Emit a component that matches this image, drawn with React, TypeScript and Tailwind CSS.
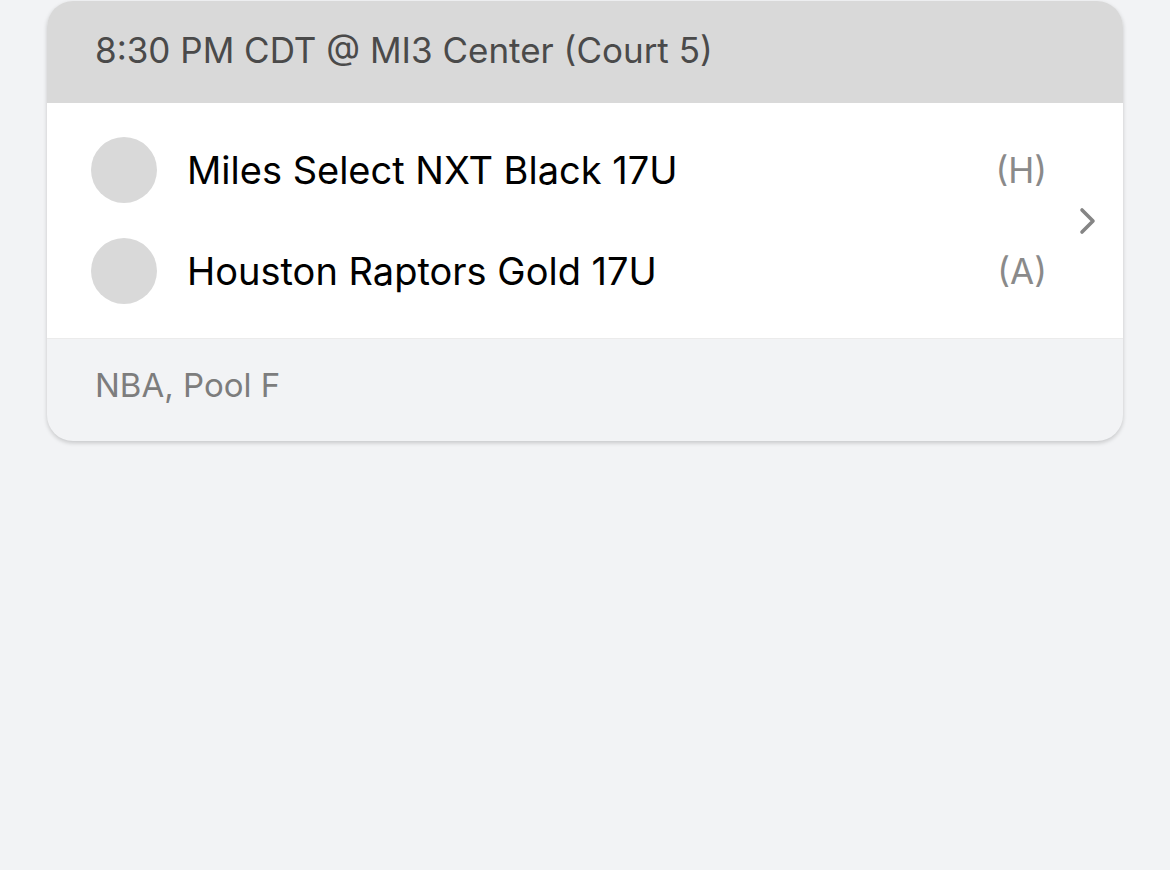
const teams = [
  { name: 'Miles Select NXT Black 17U', side: '(H)' },
  { name: 'Houston Raptors Gold 17U', side: '(A)' },
];

function Chevron() {
  return (
    <svg width="18" height="28" viewBox="0 0 18 28" className="shrink-0 text-[#858585]">
      <polyline
        points="3,3 14,14 3,25"
        fill="none"
        stroke="currentColor"
        strokeWidth="3.6"
        strokeLinecap="round"
        strokeLinejoin="round"
      />
    </svg>
  );
}

export default function App() {
  return (
    <div
      className="min-h-screen w-full bg-[#f2f3f5] px-[47px] pt-px"
      style={{ fontFamily: 'Inter, "Noto Sans", sans-serif' }}
    >
      <div className="overflow-hidden rounded-[26px] bg-[#f2f3f5] shadow-[0_2px_4px_rgba(0,0,0,0.18)]">
        <div className="flex h-[102px] items-center bg-[#d9d9d9] px-12 pb-1 text-[35px] text-[#4a4a4a]">
          8:30 PM CDT @ MI3 Center (Court 5)
        </div>
        <div className="flex items-center border-b border-[#ebebeb] bg-white pr-[26px] pl-11">
          <div className="flex flex-1 flex-col gap-[35px] py-[34px]">
            {teams.map((t) => (
              <div key={t.name} className="flex items-center">
                <div className="h-[66px] w-[66px] shrink-0 rounded-full bg-[#d9d9d9]" />
                <div className="ml-[30px] flex-1 text-[38px] text-black">{t.name}</div>
                <div className="text-[35px] text-[#8a8a8a]">{t.side}</div>
              </div>
            ))}
          </div>
          <div className="ml-[32px]">
            <Chevron />
          </div>
        </div>
        <div className="flex h-[102px] items-center px-12 pb-2 text-[33px] text-[#7d7d7d]">
          NBA, Pool F
        </div>
      </div>
    </div>
  );
}
